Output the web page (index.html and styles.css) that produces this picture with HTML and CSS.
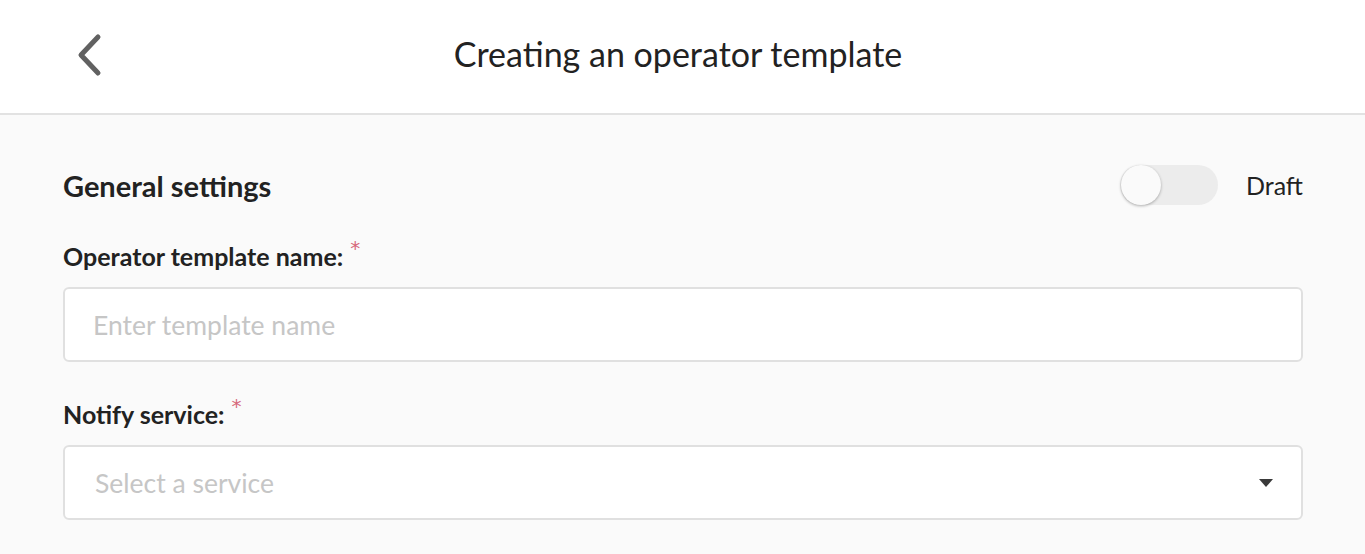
FILE: index.html
```html
<!DOCTYPE html>
<html lang="en">
<head>
<meta charset="utf-8">
<title>Creating an operator template</title>
<link rel="stylesheet" href="styles.css">
</head>
<body>
<header class="topbar">
  <button class="back" aria-label="Back">
    <svg width="28" height="44" viewBox="0 0 28 44"><path d="M22 4 L5 22 L22 40" fill="none" stroke="#616161" stroke-width="5" stroke-linecap="round" stroke-linejoin="round"/></svg>
  </button>
  <h1 class="title">Creating an operator template</h1>
  <span class="spacer"></span>
</header>
<main class="content">
  <div class="section-head">
    <h2 class="section-title">General settings</h2>
    <div class="draft">
      <span class="toggle"><span class="knob"></span></span>
      <span class="draft-label">Draft</span>
    </div>
  </div>
  <div class="field">
    <label class="label">Operator template name:<span class="req">*</span></label>
    <div class="input"><span class="placeholder">Enter template name</span></div>
  </div>
  <div class="field">
    <label class="label">Notify service:<span class="req">*</span></label>
    <div class="input select"><span class="placeholder sel">Select a service</span><span class="caret"></span></div>
  </div>
</main>
</body>
</html>
```
FILE: styles.css
```css
* { box-sizing: border-box; }
html, body { margin: 0; padding: 0; }
body {
  font-family: Lato, "Open Sans", sans-serif;
  background: #fafafa;
  color: #222;
  height: 554px;
  overflow: hidden;
}
.topbar {
  height: 115px;
  background: #fff;
  border-bottom: 2px solid #e2e2e2;
  display: flex;
  align-items: center;
  padding: 0 85px 0 76px;
}
.back {
  border: 0;
  background: none;
  padding: 0;
  width: 28px;
  height: 44px;
  display: flex;
  margin-top: -4px;
}
.title {
  flex: 1;
  text-align: center;
  margin: 0;
  font-weight: 400;
  font-size: 34px;
  color: #222;
  margin-top: -6px;
}
.spacer { width: 28px; }
.content {
  padding: 43px 62px 0 63px;
}
.section-head {
  display: flex;
  align-items: center;
  justify-content: space-between;
  height: 54px;
}
.section-title {
  margin: 0;
  font-size: 29px;
  font-weight: 700;
  color: #222;
}
.draft { display: flex; align-items: center; gap: 28px; }
.toggle {
  width: 98px;
  height: 40px;
  border-radius: 20px;
  background: #ececec;
  position: relative;
  display: block;
}
.knob {
  position: absolute;
  left: 1px;
  top: 0;
  width: 40px;
  height: 40px;
  border-radius: 50%;
  background: #fafafa;
  box-shadow: 0 1px 3px rgba(0,0,0,0.3);
}
.draft-label { font-size: 25px; color: #222; }
.field { margin-top: 29px; }
.field + .field { margin-top: 37px; }
.label {
  display: block;
  font-size: 25px;
  font-weight: 700;
  color: #222;
  line-height: 30px;
  margin-bottom: 16px;
}
.req {
  color: #d6687a;
  font-family: "DejaVu Sans", sans-serif;
  font-size: 20px;
  font-weight: 400;
  line-height: 20px;
  vertical-align: top;
  margin-left: 7px;
  position: relative;
  top: -3px;
}
.input {
  height: 75px;
  background: #fff;
  border: 2px solid #e0e0e0;
  border-radius: 6px;
  display: flex;
  align-items: center;
  padding: 0 28px;
}
.placeholder { font-size: 26.5px; color: #c6c6c6; }
.placeholder.sel { margin-left: 2px; }
.select { justify-content: space-between; padding-right: 28px; }
.caret {
  width: 0; height: 0;
  border-left: 7px solid transparent;
  border-right: 7px solid transparent;
  border-top: 8px solid #3a3a3a;
}
```
